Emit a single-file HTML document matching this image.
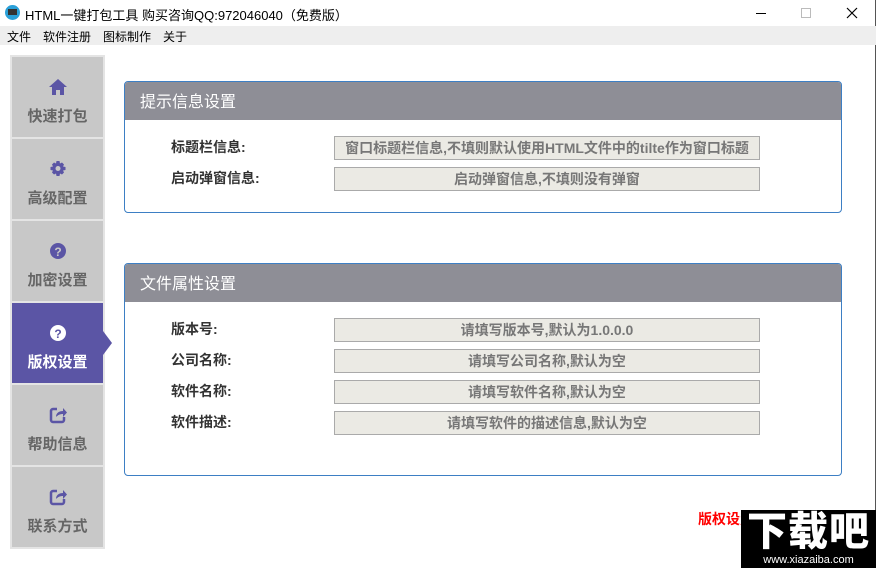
<!DOCTYPE html>
<html><head><meta charset="utf-8"><style>
*{margin:0;padding:0;box-sizing:border-box}
body{width:876px;height:568px;overflow:hidden;background:#fff;font-family:"Liberation Sans","Noto Sans CJK SC",sans-serif;position:relative}
.abs{position:absolute}
.title{left:0;top:0;width:876px;height:26px;background:#fff;font-size:13px;color:#000}
.menu{left:0;top:26px;width:876px;height:19px;background:#eeeeee;font-size:12px}
.menu span{position:absolute;top:2px}
.side{left:12px;width:91px;height:80px;background:#c8c8c8;color:#666;font-weight:bold;font-size:15px;text-align:center}
.side .t{position:absolute;left:0;right:0;top:48px}
.side svg{position:absolute;left:36px;top:20px}
.act{background:#5b55a5;color:#fff}
.panel{left:124px;width:718px;border:1px solid #3d7fc4;border-radius:4px;overflow:hidden}
.ph{height:38px;background:#8e8e96;color:#fff;font-size:16px;padding:6px 0 0 15px}
.lb{position:absolute;left:46px;font-size:14px;font-weight:bold;color:#333}
.in{position:absolute;left:209px;width:426px;height:24px;background:#ebeae4;border:1px solid #aaa;color:#777;font-size:14px;font-weight:bold;text-align:center;line-height:22px}
</style></head><body>
<div class="abs title">
<div class="abs" style="left:5px;top:5px;width:15px;height:15px;border-radius:50%;background:#2aa0d8"></div>
<div class="abs" style="left:8px;top:9px;width:9px;height:6px;background:#333"></div>
<span class="abs" style="left:25px;top:5px">HTML一键打包工具 购买咨询QQ:972046040（免费版）</span>
<div class="abs" style="left:756px;top:13px;width:10px;height:1px;background:#000"></div>
<div class="abs" style="left:801px;top:8px;width:10px;height:10px;border:1px solid #bbb"></div>
<svg class="abs" style="left:846px;top:7px" width="12" height="12"><path d="M1 1L11 11M11 1L1 11" stroke="#000" stroke-width="1.2"/></svg>
</div>
<div class="abs" style="right:0;top:0;width:1px;height:568px;background:#555"></div>
<div class="abs menu"><span style="left:7px">文件</span><span style="left:43px">软件注册</span><span style="left:103px">图标制作</span><span style="left:163px">关于</span></div>
<div class="abs" style="left:10px;top:55px;width:95px;height:494px;background:#e4e4e4"></div>
<div class="abs side" style="top:57px"><svg width="20" height="20" viewBox="0 0 20 20"><path d="M10 2L1 10h3v8h4v-5h4v5h4v-8h3z" fill="#5b55a5"/></svg><div class="t">快速打包</div></div>
<div class="abs side" style="top:139px"><svg width="20" height="20" viewBox="0 0 20 20"><path d="M8.5 2h3l.5 2.5 2-1 2 2-1 2L17.5 8v3l-2.5.5 1 2-2 2-2-1-.5 2.5h-3L8 14.5l-2 1-2-2 1-2L2.5 11V8L5 7.5l-1-2 2-2 2 1z" fill="#5b55a5"/><circle cx="10" cy="9.5" r="2.5" fill="#c8c8c8"/></svg><div class="t">高级配置</div></div>
<div class="abs side" style="top:221px"><svg width="20" height="20" viewBox="0 0 20 20"><circle cx="10" cy="10" r="8" fill="#5b55a5"/><text x="10" y="15" fill="#c8c8c8" font-size="12" font-weight="bold" text-anchor="middle" font-family="Liberation Sans">?</text></svg><div class="t">加密设置</div></div>
<div class="abs side act" style="top:303px"><svg width="20" height="20" viewBox="0 0 20 20"><circle cx="10" cy="10" r="8" fill="#fff"/><text x="10" y="15" fill="#5b55a5" font-size="12" font-weight="bold" text-anchor="middle" font-family="Liberation Sans">?</text></svg><div class="t">版权设置</div></div>
<svg class="abs" style="left:103px;top:331px" width="10" height="24"><path d="M0 0L9 12L0 24z" fill="#5b55a5"/></svg>
<div class="abs side" style="top:385px"><svg width="20" height="20" viewBox="0 0 20 20"><path d="M9 4H5a2 2 0 0 0-2 2v9a2 2 0 0 0 2 2h9a2 2 0 0 0 2-2v-3" fill="none" stroke="#5b55a5" stroke-width="2.5"/><path d="M8 12c0-4 3-6 7-6V3l4 4.5-4 4.5V9c-3 0-5 1-7 3z" fill="#5b55a5"/></svg><div class="t">帮助信息</div></div>
<div class="abs side" style="top:467px"><svg width="20" height="20" viewBox="0 0 20 20"><path d="M9 4H5a2 2 0 0 0-2 2v9a2 2 0 0 0 2 2h9a2 2 0 0 0 2-2v-3" fill="none" stroke="#5b55a5" stroke-width="2.5"/><path d="M8 12c0-4 3-6 7-6V3l4 4.5-4 4.5V9c-3 0-5 1-7 3z" fill="#5b55a5"/></svg><div class="t">联系方式</div></div>

<div class="abs panel" style="top:81px;height:132px"><div class="ph">提示信息设置</div>
<div class="lb" style="top:55px">标题栏信息:</div><div class="in" style="top:54px">窗口标题栏信息,不填则默认使用HTML文件中的tilte作为窗口标题</div>
<div class="lb" style="top:86px">启动弹窗信息:</div><div class="in" style="top:85px">启动弹窗信息,不填则没有弹窗</div>
</div>
<div class="abs panel" style="top:263px;height:213px"><div class="ph">文件属性设置</div>
<div class="lb" style="top:55px">版本号:</div><div class="in" style="top:54px">请填写版本号,默认为1.0.0.0</div>
<div class="lb" style="top:86px">公司名称:</div><div class="in" style="top:85px">请填写公司名称,默认为空</div>
<div class="lb" style="top:117px">软件名称:</div><div class="in" style="top:116px">请填写软件名称,默认为空</div>
<div class="lb" style="top:148px">软件描述:</div><div class="in" style="top:147px">请填写软件的描述信息,默认为空</div>
</div>
<div class="abs" style="left:698px;top:509px;color:#f00;font-size:14px;font-weight:bold;white-space:nowrap">版权设置保存后生效</div>
<div class="abs" style="left:741px;top:510px;width:135px;height:58px;background:#000;color:#fff;text-align:center">
<div style="font-size:40px;font-weight:900;line-height:44px;letter-spacing:1px">下载吧</div>
<div style="font-size:11px;line-height:12px">www.xiazaiba.com</div></div>
</body></html>
